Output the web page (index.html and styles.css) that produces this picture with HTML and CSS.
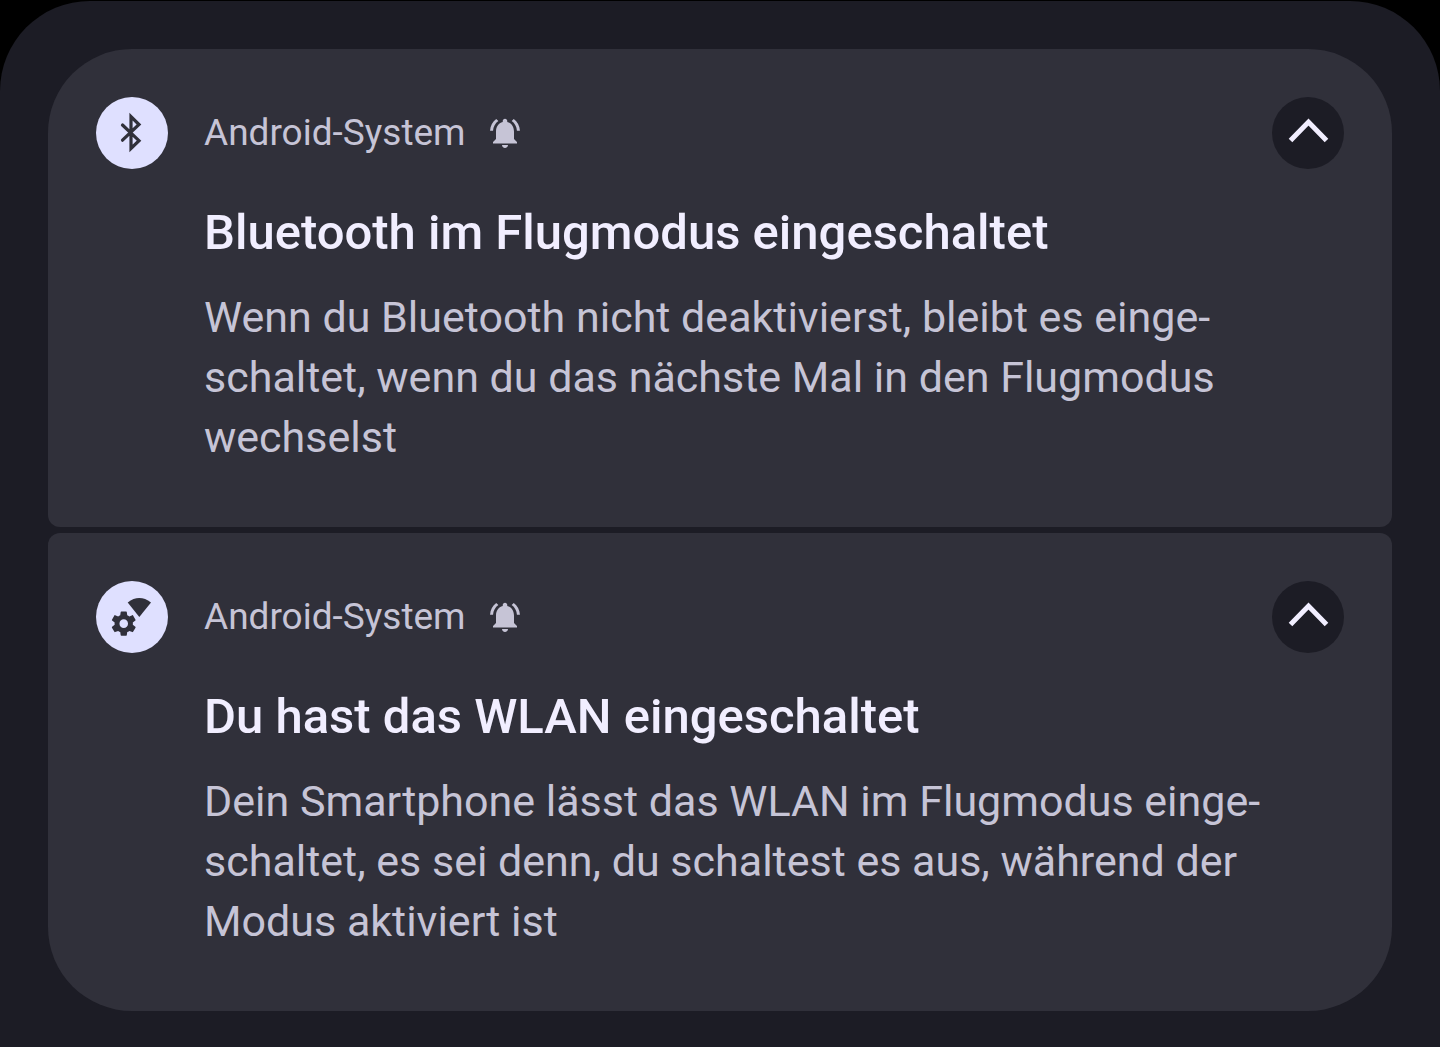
FILE: index.html
```html
<!DOCTYPE html>
<html lang="de">

<head>
    <meta charset="UTF-8">
    <meta name="viewport" content="width=device-width, initial-scale=1.0">
    <title>Benachrichtigungen</title>
    <link rel="stylesheet" href="styles.css">
</head>

<body>
    <main class="shade">
        <article class="notification">
            <header class="notification-header">
                <span class="app-icon">
                    <!-- Bluetooth -->
                    <svg viewBox="0 0 72 72" aria-hidden="true">
                        <path d="M26.5 28L43 43.7L35 51.5V19.5L43 27.5L26.5 43.2" fill="none" stroke="#30303a" stroke-width="3.2" stroke-miterlimit="8" stroke-linecap="round" />
                    </svg>
                </span>
                <span class="app-name">Android-System</span>
                <svg class="bell" viewBox="0 0 24 24" aria-hidden="true">
                    <path d="M12 22c1.1 0 2-.9 2-2h-4c0 1.1.89 2 2 2zm6-6v-5c0-3.07-1.64-5.64-4.5-6.32V4c0-.83-.67-1.5-1.5-1.5s-1.5.67-1.5 1.5v.68C7.63 5.36 6 7.92 6 11v5l-2 2v1h16v-1l-2-2zM7.58 4.08L6.15 2.65C3.75 4.48 2.17 7.3 2.03 10.5h2c.15-2.65 1.51-4.97 3.55-6.42zM19.97 10.5h2c-.15-3.2-1.73-6.02-4.12-7.85l-1.42 1.43c2.02 1.45 3.39 3.77 3.54 6.42z" />
                </svg>
                <button class="collapse" type="button" aria-label="Minimieren">
                    <svg viewBox="0 0 72 72" aria-hidden="true">
                        <path d="M18.5 43.5L36.5 25L54.5 43.5" />
                    </svg>
                </button>
            </header>
            <div class="notification-body">
                <h2>Bluetooth im Flugmodus eingeschaltet</h2>
                <p>Wenn du Bluetooth nicht deaktivierst, bleibt es einge&shy;schaltet, wenn du das nächste Mal in den Flugmodus wechselst</p>
            </div>
        </article>

        <article class="notification">
            <header class="notification-header">
                <span class="app-icon">
                    <!-- WLAN settings -->
                    <svg viewBox="0 0 72 72" aria-hidden="true">
                        <path d="M43.3 36L31.7 21.5Q43.3 12.7 55 21.5Z" fill="#30303a" />
                        <path transform="translate(13.1 28) scale(1.22)" fill="#30303a" d="M19.43 12.98c.04-.32.07-.64.07-.98s-.03-.66-.07-.98l2.11-1.65c.19-.15.24-.42.12-.64l-2-3.46c-.12-.22-.39-.3-.61-.22l-2.49 1c-.52-.4-1.08-.73-1.69-.98l-.38-2.65C14.46 2.18 14.25 2 14 2h-4c-.25 0-.46.18-.49.42l-.38 2.65c-.61.25-1.17.59-1.69.98l-2.49-1c-.23-.09-.49 0-.61.22l-2 3.46c-.13.22-.07.49.12.64l2.11 1.65c-.04.32-.07.65-.07.98s.03.66.07.98l-2.11 1.65c-.19.15-.24.42-.12.64l2 3.46c.12.22.39.3.61.22l2.49-1c.52.4 1.08.73 1.69.98l.38 2.65c.03.24.24.42.49.42h4c.25 0 .46-.18.49-.42l.38-2.65c.61-.25 1.17-.59 1.69-.98l2.49 1c.23.09.49 0 .61-.22l2-3.46c.12-.22.07-.49-.12-.64l-2.11-1.65zM12 15.5c-1.93 0-3.5-1.57-3.5-3.5s1.57-3.5 3.5-3.5 3.5 1.57 3.5 3.5-1.57 3.5-3.5 3.5z" />
                    </svg>
                </span>
                <span class="app-name">Android-System</span>
                <svg class="bell" viewBox="0 0 24 24" aria-hidden="true">
                    <path d="M12 22c1.1 0 2-.9 2-2h-4c0 1.1.89 2 2 2zm6-6v-5c0-3.07-1.64-5.64-4.5-6.32V4c0-.83-.67-1.5-1.5-1.5s-1.5.67-1.5 1.5v.68C7.63 5.36 6 7.92 6 11v5l-2 2v1h16v-1l-2-2zM7.58 4.08L6.15 2.65C3.75 4.48 2.17 7.3 2.03 10.5h2c.15-2.65 1.51-4.97 3.55-6.42zM19.97 10.5h2c-.15-3.2-1.73-6.02-4.12-7.85l-1.42 1.43c2.02 1.45 3.39 3.77 3.54 6.42z" />
                </svg>
                <button class="collapse" type="button" aria-label="Minimieren">
                    <svg viewBox="0 0 72 72" aria-hidden="true">
                        <path d="M18.5 43.5L36.5 25L54.5 43.5" />
                    </svg>
                </button>
            </header>
            <div class="notification-body">
                <h2>Du hast das WLAN eingeschaltet</h2>
                <p>Dein Smartphone lässt das WLAN im Flugmodus einge&shy;schaltet, es sei denn, du schaltest es aus, während der Modus aktiviert ist</p>
            </div>
        </article>
    </main>
</body>

</html>
```

FILE: styles.css
```css
* {
    box-sizing: border-box;
}

body {
    margin: 0;
    padding-top: 1px;
    min-height: 100vh;
    display: flex;
    background-color: #000;
    font-family: Roboto, Arial, sans-serif;
}

.shade {
    flex: 1;
    display: flex;
    flex-direction: column;
    gap: 6px;
    padding: 48px 48px 36px;
    border-radius: 90px 90px 0 0;
    background-color: #1c1c25;
}

.notification {
    padding: 48px 48px 60px;
    border-radius: 12px;
    background-color: #30303a;
}

.notification:first-child {
    border-top-left-radius: 84px;
    border-top-right-radius: 84px;
}

.notification:last-child {
    border-bottom-left-radius: 84px;
    border-bottom-right-radius: 84px;
}

.notification-header {
    display: flex;
    align-items: center;
}

.app-icon {
    width: 72px;
    height: 72px;
    margin-right: 36px;
    border-radius: 50%;
    background-color: #dfe0ff;
}

.app-icon svg,
.collapse svg {
    display: block;
    width: 72px;
    height: 72px;
}

.app-name {
    font-size: 37px;
    line-height: 48px;
    color: #c6c4d6;
}

.bell {
    width: 36px;
    height: 36px;
    margin-left: 21px;
    fill: #c6c4d6;
}

.collapse {
    width: 72px;
    height: 72px;
    margin-left: auto;
    padding: 0;
    border: none;
    border-radius: 50%;
    background-color: #1c1c25;
    cursor: pointer;
}

.collapse path {
    fill: none;
    stroke: #f1eeff;
    stroke-width: 5;
}

.notification-body {
    padding: 34px 72px 0 108px;
}

.notification-body h2 {
    margin: 0 0 24px;
    font-size: 49px;
    font-weight: 500;
    line-height: 60px;
    color: #f1eeff;
}

.notification-body p {
    margin: 0;
    font-size: 43px;
    line-height: 60px;
    color: #c6c4d6;
}
```
